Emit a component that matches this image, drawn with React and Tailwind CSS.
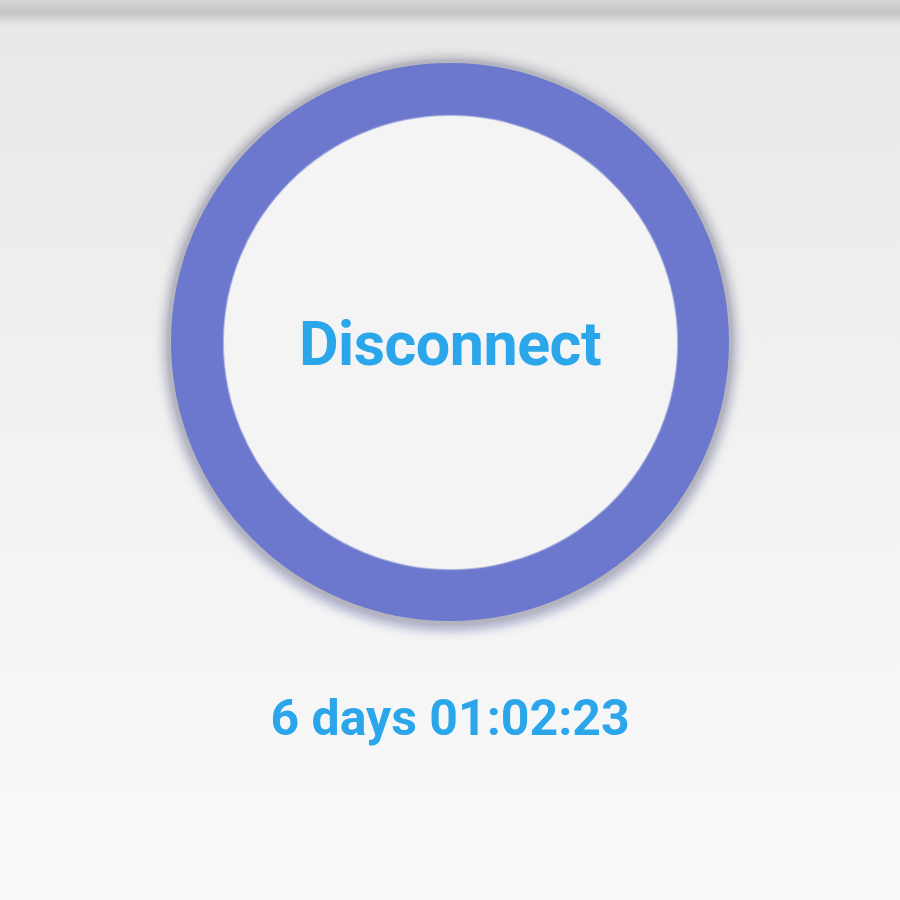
export default function App() {
  return (
    <div
      className="w-[900px] h-[900px] flex flex-col items-center bg-gradient-to-b from-[#e8e8e8] via-[#f2f2f2] to-[#fafafa] relative overflow-hidden"
      style={{ fontFamily: "Roboto, 'Liberation Sans', sans-serif" }}
    >
      <div className="absolute top-0 left-0 w-full h-[26px] bg-gradient-to-b from-[#d4d4d4] via-[#c6c6c6] to-[#e8e8e8]/0" />
      <div className="mt-[63px] w-[558px] h-[558px] rounded-full bg-[#6b78cd] flex items-center justify-center shadow-[0_0_2px_4px_rgba(180,180,190,0.95),0_0_10px_8px_rgba(170,170,178,0.6),0_6px_12px_3px_rgba(107,120,205,0.45)]">
        <div className="w-[453px] h-[453px] rounded-full bg-[#f4f4f4] flex items-center justify-center shadow-[0_0_1px_1px_rgba(244,244,244,0.6)]">
          <span className="text-[#2ba6ea] font-bold text-[61px] leading-none tracking-[-0.5px] mt-[4px]">Disconnect</span>
        </div>
      </div>
      <div className="mt-[72px] text-[#2ba6ea] font-bold text-[50px] leading-none">6 days 01:02:23</div>
    </div>
  )
}
